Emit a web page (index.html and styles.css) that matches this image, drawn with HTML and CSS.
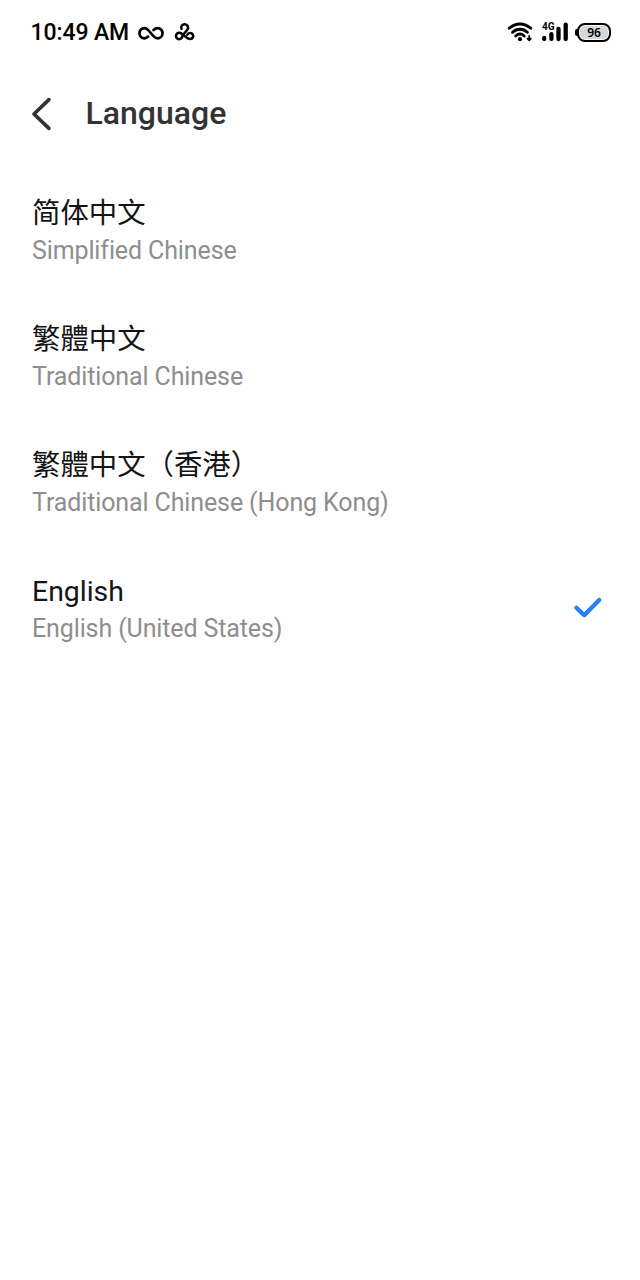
FILE: index.html
```html
<!DOCTYPE html>
<html lang="en">
<head>
<meta charset="utf-8">
<title>Language</title>
<link rel="stylesheet" href="styles.css">
</head>
<body>
<div class="status">
  <span class="time">10:49 AM</span>
  <svg class="loop" width="28" height="18" viewBox="0 0 28 18"><path d="M11.2 12.6C9.8 13.9 8.7 14.3 7.5 14.3C4.7 14.3 2.5 12.1 2.5 9.2S4.7 4.1 7.5 4.1C12.7 4.1 15.3 14.3 20.5 14.3C23.3 14.3 25.5 12.1 25.5 9.2S23.3 4.1 20.5 4.1C18.9 4.1 17.6 4.9 16.5 6"/></svg>
  <svg class="knot" width="22" height="20" viewBox="0 0 22 20"><path d="M7.5 6.9A3.4 3.4 0 1 1 13.6 7.2C12.6 9.2 9.4 11.6 8.4 14.2A3.2 3.2 0 1 1 5.2 10.8C9.3 10.8 11.8 17.1 16.3 17.1A3.1 3.1 0 1 0 13.3 12.6"/></svg>
  <svg class="wifi" width="26" height="22" viewBox="0 0 26 22"><g fill="none" stroke="#000" stroke-width="2.9" stroke-linecap="round"><path d="M2.2 7.3C8.4 1.5 17.4 1.5 23.8 7.3"/><path d="M5.5 11.3C9.9 7.3 16 7.3 20.4 11.3"/><path d="M8.7 15C11.4 12.6 14.6 12.6 17.2 15"/></g><circle cx="13" cy="18.2" r="2.1"/><path d="M22.2 14.2V19.2M20 17.1l2.2 2.2 2.2-2.2" fill="none" stroke="#000" stroke-width="1.8"/></svg>
  <div class="signal">
    <span class="net">4G</span>
    <svg width="28" height="22" viewBox="0 0 28 22"><g fill="none" stroke="#000" stroke-width="4.3" stroke-linecap="round"><path d="M3.2 17V18"/><path d="M10.4 13.2V18"/><path d="M17.5 8V18"/><path d="M24.7 3.6V18"/></g></svg>
  </div>
  <div class="battery"><span>96</span></div>
</div>
<header class="header">
  <svg width="22" height="36" viewBox="0 0 22 36"><path d="M18.9 3.6L4 18L18.9 32.4"/></svg>
  <h1>Language</h1>
</header>
<main class="list">
  <div class="row"><div><p class="name">简体中文</p><p class="sub">Simplified Chinese</p></div></div>
  <div class="row"><div><p class="name tc">繁體中文</p><p class="sub">Traditional Chinese</p></div></div>
  <div class="row"><div><p class="name tc">繁體中文（香港）</p><p class="sub">Traditional Chinese (Hong Kong)</p></div></div>
  <div class="row"><div><p class="name">English</p><p class="sub">English (United States)</p></div>
    <svg class="check" width="30" height="24" viewBox="0 0 30 24"><path d="M3.4 11.8L11.2 19.2L26.2 4"/></svg></div>
</main>
</body>
</html>
```
FILE: styles.css
```css
* { box-sizing: border-box; }
body { margin: 0; width: 640px; height: 1280px; background: #fefefe; font-family: Roboto, "Noto Sans CJK SC", sans-serif; overflow: hidden; }
p, h1 { margin: 0; white-space: nowrap; }
svg { display: block; flex: none; }
.status { display: flex; align-items: center; height: 64px; padding: 0 29px 0 30.5px; color: #000; }
.time { width: 106.5px; padding-top: 2px; font-size: 23px; font-weight: 500; line-height: 28px; letter-spacing: -0.1px; white-space: nowrap; }
.loop, .knot { fill: none; stroke: #000; stroke-width: 2.7; stroke-linecap: round; }
.loop { margin-top: 1px; }
.knot { margin-left: 9px; stroke-width: 2.5; }
.wifi { margin-left: auto; }
.signal { position: relative; margin-left: 8px; }
.net { position: absolute; left: 1px; top: 1px; font-size: 10px; line-height: 10px; font-weight: 700; }
.battery { position: relative; display: flex; align-items: center; justify-content: center; width: 34px; height: 19px; margin-left: 8px; border: 2px solid #000; border-radius: 8px; background: #d7d7d7; font-family: "Noto Sans", sans-serif; font-size: 12px; font-weight: 600; line-height: 14px; box-shadow: inset 0 0 0 1px #fff; }
.battery span { padding-top: 1px; }
.battery::before { content: ""; position: absolute; left: -4px; top: 4px; width: 3px; height: 7px; border-radius: 2px 0 0 2px; background: #000; }
.header { display: flex; align-items: center; height: 100px; padding-left: 30px; }
.header path { fill: none; stroke: #333; stroke-width: 3.7; stroke-linecap: round; stroke-linejoin: round; }
.header h1 { margin: -2px 0 0 33.5px; font-size: 32px; line-height: 40px; font-weight: 500; color: #333; }
.list { padding: 18px 37.5px 0 32px; }
.row { display: flex; align-items: center; justify-content: space-between; height: 98px; margin-bottom: 28px; }
.name { font-size: 28.4px; line-height: 40px; color: #141414; }
.tc { font-family: Roboto, "Noto Sans CJK TC", sans-serif; }
.sub { font-size: 25px; line-height: 34px; letter-spacing: -0.12px; color: #8e8e8e; font-variant-ligatures: common-ligatures; }
.check { margin-top: -2px; }
.check path { fill: none; stroke: #2680f5; stroke-width: 4.3; stroke-linecap: round; stroke-linejoin: round; }
```
